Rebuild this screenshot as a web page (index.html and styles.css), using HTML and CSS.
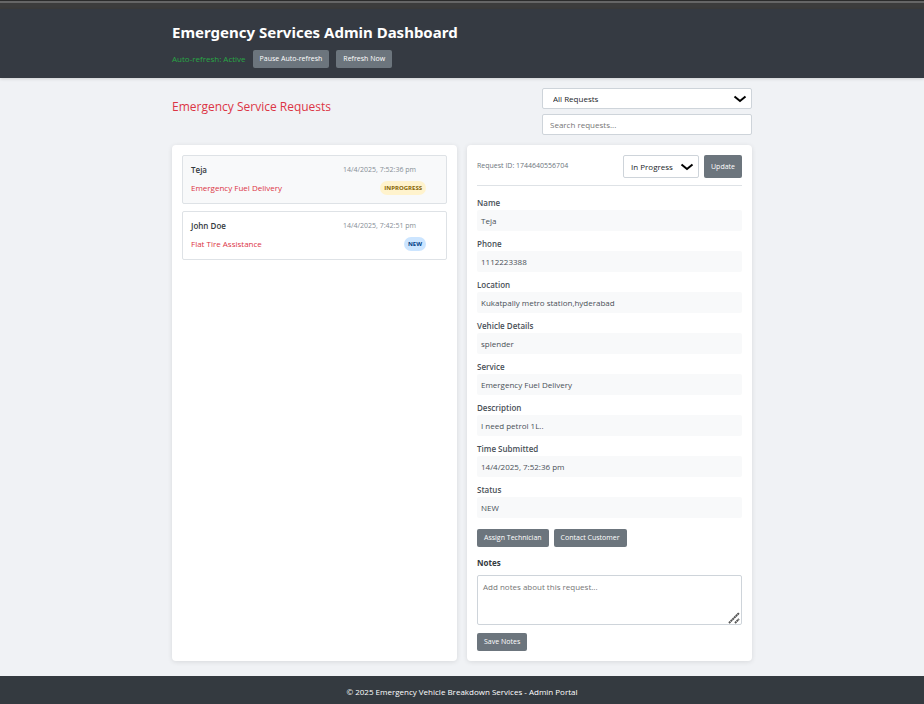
FILE: index.html
```html
<!DOCTYPE html>
<html lang="en">
<head>
<meta charset="utf-8">
<meta name="viewport" content="width=device-width, initial-scale=1">
<title>Emergency Services Admin Dashboard</title>
<link rel="stylesheet" href="styles.css">
</head>
<body>
<div class="window-edge"></div>
<header class="site-header">
  <div class="container">
    <h1>Emergency Services Admin Dashboard</h1>
    <div class="refresh-controls">
      <span class="refresh-status">Auto-refresh: Active</span>
      <button class="btn" type="button">Pause Auto-refresh</button>
      <button class="btn" type="button">Refresh Now</button>
    </div>
  </div>
</header>

<main class="container main">
  <div class="toolbar">
    <h2>Emergency Service Requests</h2>
    <div class="filters">
      <div class="select-wrap">
        <select class="filter-select" aria-label="Filter requests"><option>All Requests</option><option>New</option><option>In Progress</option></select>
        <svg class="chevron" viewBox="0 0 14 8" aria-hidden="true"><path d="M1.5 1.5 7 6 12.5 1.5"/></svg>
      </div>
      <input class="search" type="text" placeholder="Search requests..." aria-label="Search requests">
    </div>
  </div>

  <div class="panels">
    <section class="panel request-list" aria-label="Requests">
      <article class="request selected">
        <div class="request-row"><span class="customer">Teja</span><time class="request-time">14/4/2025, 7:52:36 pm</time></div>
        <div class="request-row"><span class="service">Emergency Fuel Delivery</span><span class="badge badge-progress">INPROGRESS</span></div>
      </article>
      <article class="request">
        <div class="request-row"><span class="customer">John Doe</span><time class="request-time">14/4/2025, 7:42:51 pm</time></div>
        <div class="request-row"><span class="service">Flat Tire Assistance</span><span class="badge badge-new">NEW</span></div>
      </article>
    </section>

    <section class="panel" aria-label="Request details">
      <div class="detail-header">
        <span class="request-id">Request ID: 1744640556704</span>
        <div class="status-controls">
          <div class="select-wrap">
            <select class="status-select" aria-label="Status"><option>In Progress</option><option>New</option></select>
            <svg class="chevron" viewBox="0 0 14 8" aria-hidden="true"><path d="M1.5 1.5 7 6 12.5 1.5"/></svg>
          </div>
          <button class="btn btn-update" type="button">Update</button>
        </div>
      </div>
      <dl class="details">
        <div class="field"><dt>Name</dt><dd>Teja</dd></div>
        <div class="field"><dt>Phone</dt><dd>1112223388</dd></div>
        <div class="field"><dt>Location</dt><dd>Kukatpally metro station,hyderabad</dd></div>
        <div class="field"><dt>Vehicle Details</dt><dd>splender</dd></div>
        <div class="field"><dt>Service</dt><dd>Emergency Fuel Delivery</dd></div>
        <div class="field"><dt>Description</dt><dd>I need petrol 1L..</dd></div>
        <div class="field"><dt>Time Submitted</dt><dd>14/4/2025, 7:52:36 pm</dd></div>
        <div class="field"><dt>Status</dt><dd>NEW</dd></div>
      </dl>
      <div class="actions">
        <button class="btn" type="button">Assign Technician</button>
        <button class="btn" type="button">Contact Customer</button>
      </div>
      <label class="notes-label" for="notes">Notes</label>
      <div class="notes-wrap">
        <textarea class="notes" id="notes" placeholder="Add notes about this request..."></textarea>
        <svg class="grip" viewBox="0 0 12 12" aria-hidden="true"><path d="M1 11 11 1M7 11 11 7"/></svg>
      </div>
      <button class="btn" type="button">Save Notes</button>
    </section>
  </div>
</main>

<footer class="site-footer">© 2025 Emergency Vehicle Breakdown Services - Admin Portal</footer>
</body>
</html>
```

FILE: styles.css
```css
* {
  box-sizing: border-box;
}

body {
  margin: 0;
  min-height: 100vh;
  display: flex;
  flex-direction: column;
  background: #f0f2f5;
  color: #343a40;
  font-family: "Segoe UI", "Open Sans", sans-serif;
  font-size: 8px;
  line-height: 12px;
}

button,
input,
select,
textarea {
  font: inherit;
}

h1,
h2,
dl,
dd {
  margin: 0;
}

.container {
  width: 100%;
  max-width: 580px;
  margin: 0 auto;
}

/* Header */
.window-edge {
  height: 9px;
  background: linear-gradient(#2b2b2b 1px, #666 1px, #666 3px, #3c3c3c 3px);
}

.site-header {
  padding: 13px 0 10px;
  background: #353a42;
  box-shadow: 0 1px 3px rgba(0, 0, 0, 0.15);
}

h1 {
  color: #fff;
  font-family: "Segoe UI", "Noto Sans", sans-serif;
  font-size: 15px;
  font-weight: 700;
  line-height: 20px;
}

.refresh-controls {
  display: flex;
  align-items: center;
  gap: 7px;
  margin-top: 8px;
}

.refresh-status {
  color: #28a745;
  font-weight: 500;
}

.btn {
  height: 18px;
  padding: 0 7px;
  border: 0;
  border-radius: 2px;
  background: #6c757d;
  color: #fff;
  font-size: 7px;
  font-weight: 500;
}

/* Toolbar */
.main {
  flex: 1;
  display: flex;
  flex-direction: column;
  padding: 10px 0 15px;
}

.toolbar {
  display: flex;
  justify-content: space-between;
  margin-bottom: 10px;
}

h2 {
  padding-top: 10px;
  color: #dc3545;
  font-size: 12px;
  font-weight: 500;
  line-height: 18px;
}

.filters {
  display: flex;
  flex-direction: column;
  gap: 5px;
  width: 210px;
}

.select-wrap {
  position: relative;
  display: flex;
}

.filter-select,
.status-select,
.search {
  width: 100%;
  height: 21px;
  border: 1px solid #ced4da;
  border-radius: 2px;
  background: #fff;
  color: #212529;
}

.filter-select,
.status-select {
  appearance: none;
  padding: 0 24px 0 10px;
}

.search {
  padding: 0 7px;
}

.search::placeholder,
.notes::placeholder {
  color: #757575;
}

.chevron {
  position: absolute;
  top: 50%;
  right: 5px;
  width: 14px;
  height: 8px;
  margin-top: -4px;
  fill: none;
  stroke: #000;
  stroke-width: 2;
  pointer-events: none;
}

/* Panels */
.panels {
  flex: 1;
  display: grid;
  grid-template-columns: 1fr 1fr;
  gap: 10px;
}

.panel {
  padding: 10px;
  border-radius: 4px;
  background: #fff;
  box-shadow: 0 1px 5px rgba(0, 0, 0, 0.1);
}

.request {
  height: 49px;
  margin-bottom: 7px;
  padding: 7px 20px 7px 8px;
  border: 1px solid #dee2e6;
  border-radius: 2px;
}

.selected {
  background: #f8f9fa;
}

.request-row {
  display: flex;
  align-items: center;
  justify-content: space-between;
  height: 14px;
}

.request-row + .request-row {
  margin-top: 4px;
}

.customer {
  font-weight: 600;
}

.request-time {
  margin-right: 10px;
  color: #868e96;
  font-size: 7px;
}

.service {
  color: #dc3545;
  font-weight: 500;
}

.badge {
  padding: 1px 4px;
  border-radius: 7px;
  font-size: 6px;
  font-weight: 700;
}

.badge-progress {
  background: #fff3cd;
  color: #856404;
}

.badge-new {
  background: #cce5ff;
  color: #004085;
}

/* Request details */
.detail-header {
  display: flex;
  justify-content: space-between;
  padding-bottom: 7px;
  border-bottom: 1px solid #dee2e6;
}

.request-id {
  padding-top: 5px;
  color: #6c757d;
  font-size: 7px;
}

.status-controls {
  display: flex;
  gap: 5px;
}

.status-select {
  width: 76px;
  height: 23px;
  padding-left: 7px;
}

.btn-update {
  height: 23px;
}

.details {
  margin-top: 11px;
}

.field {
  margin-bottom: 7px;
}

dt {
  color: #495057;
  font-weight: 600;
}

dd {
  padding: 4px;
  margin-top: 1px;
  border-radius: 2px;
  background: #f8f9fa;
  color: #495057;
  line-height: 13px;
}

.actions {
  display: flex;
  gap: 5px;
  margin: 11px 0 10px;
}

.notes-label {
  display: block;
  font-weight: 700;
}

.notes-wrap {
  position: relative;
  display: flex;
  margin: 6px 0 8px;
}

.notes {
  width: 100%;
  height: 50px;
  padding: 5px;
  border: 1px solid #ced4da;
  border-radius: 2px;
  resize: none;
}

.grip {
  position: absolute;
  right: 2px;
  bottom: 1px;
  width: 12px;
  height: 12px;
  fill: none;
  stroke: #555;
  stroke-width: 2;
  stroke-dasharray: 2 0.4;
  pointer-events: none;
}

/* Footer */
.site-footer {
  padding: 10px 0 6px;
  background: #343a40;
  color: #fff;
  font-weight: 500;
  text-align: center;
}
```
